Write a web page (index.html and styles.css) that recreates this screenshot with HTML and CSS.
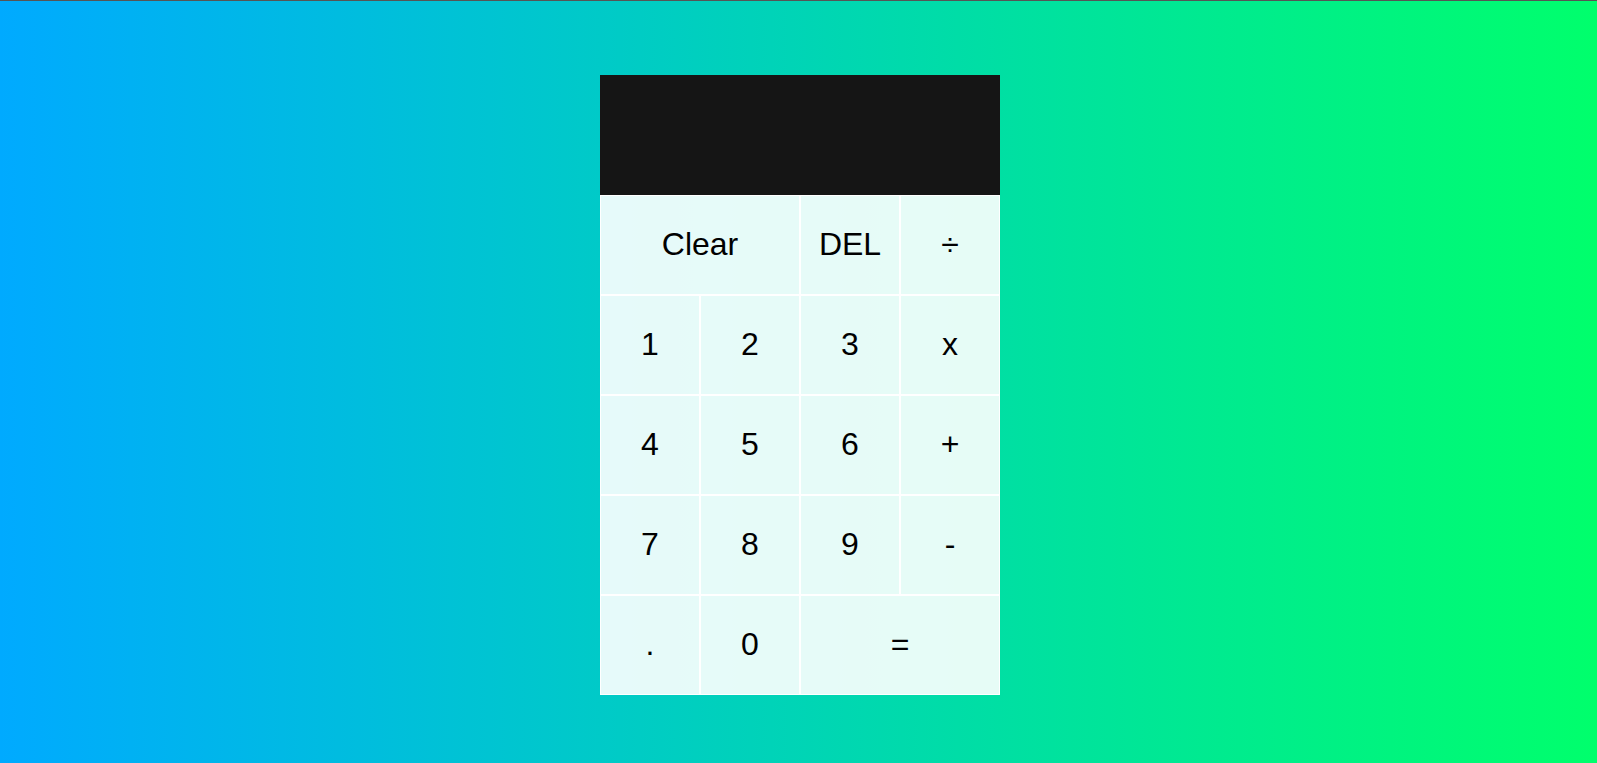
FILE: index.html
```html
<!DOCTYPE html>
<html>
<head>
<meta charset="utf-8">
<link rel="stylesheet" href="styles.css">
</head>
<body>
<div class="calculator-grid">
  <div class="output">
    <div class="previous-operand"></div>
    <div class="current-operand"></div>
  </div>
  <button class="span-two">Clear</button>
  <button>DEL</button>
  <button>÷</button>
  <button>1</button>
  <button>2</button>
  <button>3</button>
  <button>x</button>
  <button>4</button>
  <button>5</button>
  <button>6</button>
  <button>+</button>
  <button>7</button>
  <button>8</button>
  <button>9</button>
  <button>-</button>
  <button>.</button>
  <button>0</button>
  <button class="span-two">=</button>
</div>
</body>
</html>
```
FILE: styles.css
```css
*, *::before, *::after {
  box-sizing: border-box;
  font-family: "Liberation Sans", Arial, sans-serif;
  font-weight: normal;
}

body {
  margin: 0;
  padding: 0;
  border-top: 1px solid #555;
  background: linear-gradient(to right, #00AAFF, #00FF6C);
}

.calculator-grid {
  display: grid;
  justify-content: center;
  align-content: start;
  min-height: calc(100vh - 1px);
  padding: 74px 0 0 3px;
  grid-template-columns: repeat(4, 100px);
  grid-template-rows: minmax(120px, auto) repeat(5, 100px);
}

.calculator-grid > button {
  cursor: pointer;
  font-size: 2rem;
  border: 1px solid white;
  outline: none;
  background-color: rgba(255, 255, 255, .9);
  color: #000;
  padding: 0 0 2px 0;
}

.span-two {
  grid-column: span 2;
}

.output {
  grid-column: 1 / -1;
  background-color: #151515;
  display: flex;
  align-items: flex-end;
  justify-content: space-around;
  flex-direction: column;
  padding: 10px;
  word-wrap: break-word;
  word-break: break-all;
}

.previous-operand {
  color: rgba(255, 255, 255, .75);
  font-size: 1.5rem;
}

.current-operand {
  color: white;
  font-size: 2.5rem;
}
```
